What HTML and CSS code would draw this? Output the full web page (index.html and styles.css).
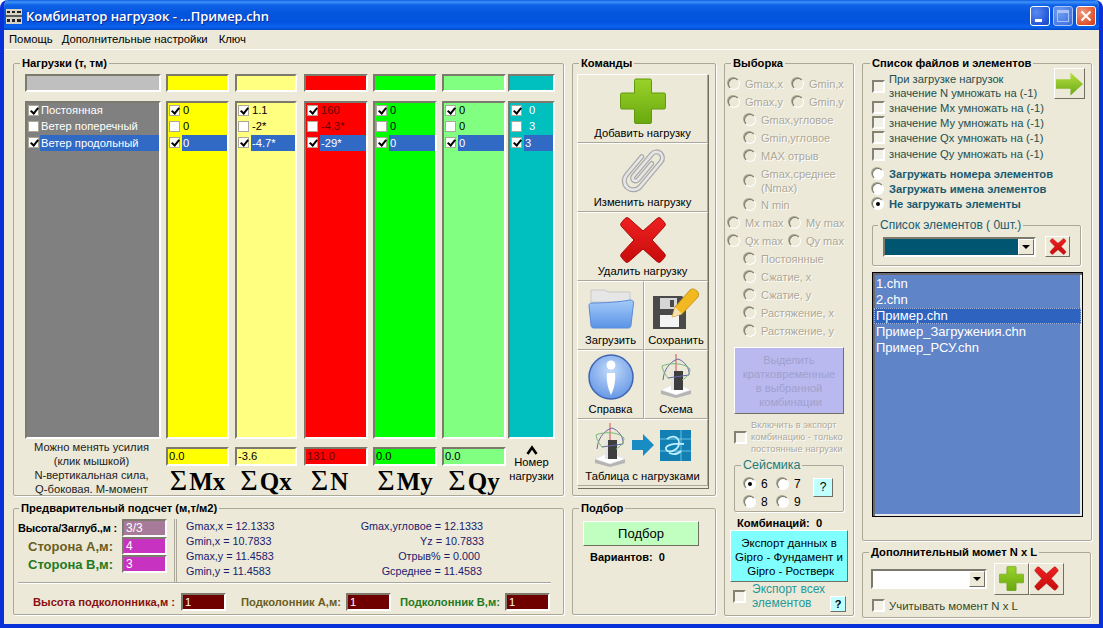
FILE: index.html
```html
<!DOCTYPE html>
<html lang="ru">
<head>
    <meta charset="UTF-8">
    <title>Комбинатор нагрузок</title>
    <link rel="stylesheet" href="styles.css">
</head>
<body>
<svg class="defs" aria-hidden="true">
    <defs>
        <linearGradient id="gPlus" x1="0" y1="0" x2="0" y2="1"><stop offset="0" stop-color="#9ad22a"/><stop offset="1" stop-color="#69a80e"/></linearGradient>
        <linearGradient id="gCross" x1="0" y1="0" x2="0" y2="1"><stop offset="0" stop-color="#ee2020"/><stop offset="1" stop-color="#c80c0c"/></linearGradient>
        <linearGradient id="gFolder" x1="0" y1="0" x2="0" y2="1"><stop offset="0" stop-color="#a4cbf8"/><stop offset="1" stop-color="#5b93e6"/></linearGradient>
        <radialGradient id="gInfo" cx="0.5" cy="0.35" r="0.7"><stop offset="0" stop-color="#c4dcfa"/><stop offset="1" stop-color="#5f92e4"/></radialGradient>
        <linearGradient id="gArrow" x1="0" y1="0" x2="0" y2="1"><stop offset="0" stop-color="#b8e040"/><stop offset="1" stop-color="#6aa818"/></linearGradient>
        <symbol id="plus" viewBox="0 0 46 46">
            <path d="M16 1h14a1.500 1.500 0 0 1 1.500 1.500V15H44a1.500 1.500 0 0 1 1.500 1.500v13a1.500 1.500 0 0 1-1.500 1.500H31.500v13a1.500 1.500 0 0 1-1.500 1.500H16a1.500 1.500 0 0 1-1.500-1.500V31H2a1.500 1.500 0 0 1-1.500-1.500v-13A1.500 1.500 0 0 1 2 15h12.500V2.500A1.500 1.500 0 0 1 16 1z" fill="url(#gPlus)" stroke="#5f9a0c"/>
        </symbol>
        <symbol id="cross" viewBox="0 0 48 48">
            <path d="M10 2.500 24 15 38 2.500a3 3 0 0 1 4 0l3.500 4a3 3 0 0 1 0 4L33 24l12.500 13.500a3 3 0 0 1 0 4l-3.500 4a3 3 0 0 1-4 0L24 33 10 45.500a3 3 0 0 1-4 0l-3.500-4a3 3 0 0 1 0-4L15 24 2.500 10.500a3 3 0 0 1 0-4L6 2.500a3 3 0 0 1 4 0z" fill="url(#gCross)" stroke="#a80808"/>
        </symbol>
        <symbol id="schema" viewBox="0 0 32 44">
            <path d="M1 36v4l15 4 15-4v-4z" fill="#b4b4b4"/>
            <path d="M1 36 16 29l15 7-15 5z" fill="#fff" stroke="#d8d8d8" stroke-width=".5"/>
            <rect x="11" y="17" width="3" height="19" fill="#e4e4e4"/>
            <rect x="14" y="17" width="9" height="19" fill="#3e3e3e"/>
            <path d="M16 0v17" stroke="#d05050"/>
            <path d="M3 26C4 12 14 6 18 5c6 2 12 9 11 16L8 24" fill="none" stroke="#6666a8"/>
            <path d="M2 12c6-3 22-4 28 3 0 5-4 9-8 11M2 12c1 6 4 10 7 13" fill="none" stroke="#78b878"/>
        </symbol>
    </defs>
</svg>

<div class="window">
    <div class="titlebar">
        <svg class="app-icon" width="16" height="15" viewBox="0 0 16 15">
            <rect width="16" height="15" fill="#d8d4c4"/>
            <path d="M1 2h3v2H1zM6 2h3v2H6zM11 2h4v2h-4z" fill="#222"/>
            <path d="M0 6h16v2H0z" fill="#5a5a5a"/>
            <path d="M1 10h3v3H1zM6 10h3v3H6zM11 10h4v3h-4z" fill="#223"/>
        </svg>
        <span class="title">Комбинатор нагрузок - ...Пример.chn</span>
        <div class="win-btns">
            <span class="win-btn"><i class="min-mark"></i></span>
            <span class="win-btn win-off"><i class="max-mark"></i></span>
            <span class="win-btn win-close">
                <svg width="12" height="12" viewBox="0 0 12 12"><path d="M1.500 1.500l9 9M10.500 1.500l-9 9" stroke="#fff" stroke-width="2"/></svg>
            </span>
        </div>
    </div>

    <div class="menu">
        <span>Помощь</span>
        <span>Дополнительные настройки</span>
        <span class="menu-last">Ключ</span>
    </div>

    <div class="content">
        <div class="col col-main">
            <fieldset class="group loads">
                <legend>Нагрузки (т, тм)</legend>
                <div class="load-cols">
                    <div class="load-col c-names">
                        <div class="swatch"></div>
                        <div class="load-list">
                            <label class="row"><input type="checkbox" class="chk" checked><span>Постоянная</span></label>
                            <label class="row"><input type="checkbox" class="chk"><span>Ветер поперечный</span></label>
                            <label class="row sel"><input type="checkbox" class="chk" checked><span>Ветер продольный</span></label>
                        </div>
                        <div class="hint">Можно менять усилия<br>(клик мышкой)<br>N-вертикальная сила,<br>Q-боковая. М-момент</div>
                    </div>
                    <div class="load-col c-mx">
                        <div class="swatch"></div>
                        <div class="load-list">
                            <label class="row"><input type="checkbox" class="chk" checked><span>0</span></label>
                            <label class="row"><input type="checkbox" class="chk"><span>0</span></label>
                            <label class="row sel"><input type="checkbox" class="chk" checked><span>0</span></label>
                        </div>
                        <div class="total">0.0</div>
                        <div class="sum"><b>Σ</b>Mx</div>
                    </div>
                    <div class="load-col c-qx">
                        <div class="swatch"></div>
                        <div class="load-list">
                            <label class="row"><input type="checkbox" class="chk" checked><span>1.1</span></label>
                            <label class="row"><input type="checkbox" class="chk"><span>-2*</span></label>
                            <label class="row sel"><input type="checkbox" class="chk" checked><span>-4.7*</span></label>
                        </div>
                        <div class="total">-3.6</div>
                        <div class="sum"><b>Σ</b>Qx</div>
                    </div>
                    <div class="load-col c-n">
                        <div class="swatch"></div>
                        <div class="load-list">
                            <label class="row"><input type="checkbox" class="chk" checked><span>160</span></label>
                            <label class="row"><input type="checkbox" class="chk"><span>-4.3*</span></label>
                            <label class="row sel"><input type="checkbox" class="chk" checked><span>-29*</span></label>
                        </div>
                        <div class="total">131.0</div>
                        <div class="sum"><b>Σ</b>N</div>
                    </div>
                    <div class="load-col c-my">
                        <div class="swatch"></div>
                        <div class="load-list">
                            <label class="row"><input type="checkbox" class="chk" checked><span>0</span></label>
                            <label class="row"><input type="checkbox" class="chk"><span>0</span></label>
                            <label class="row sel"><input type="checkbox" class="chk" checked><span>0</span></label>
                        </div>
                        <div class="total">0.0</div>
                        <div class="sum"><b>Σ</b>My</div>
                    </div>
                    <div class="load-col c-qy">
                        <div class="swatch"></div>
                        <div class="load-list">
                            <label class="row"><input type="checkbox" class="chk" checked><span>0</span></label>
                            <label class="row"><input type="checkbox" class="chk"><span>0</span></label>
                            <label class="row sel"><input type="checkbox" class="chk" checked><span>0</span></label>
                        </div>
                        <div class="total">0.0</div>
                        <div class="sum"><b>Σ</b>Qy</div>
                    </div>
                    <div class="load-col c-num">
                        <div class="swatch"></div>
                        <div class="load-list">
                            <label class="row"><input type="checkbox" class="chk" checked><span>0</span></label>
                            <label class="row"><input type="checkbox" class="chk"><span>3</span></label>
                            <label class="row sel"><input type="checkbox" class="chk" checked><span>3</span></label>
                        </div>
                        <div class="num-note">
                            <svg class="caret" width="12" height="10" viewBox="0 0 12 10"><path d="M1.500 9 6 2.500 10.500 9" fill="none" stroke="#000" stroke-width="2.600"/></svg>
                            Номер<br>нагрузки
                        </div>
                    </div>
                </div>
            </fieldset>

            <fieldset class="group prelim">
                <legend>Предварительный подсчет (м,т/м2)</legend>
                <div class="prelim-top">
                    <div class="sizes">
                        <span class="size-head">Высота/Заглуб.,м :</span><div class="size-box box-muted">3/3</div>
                        <span class="size-label olive">Сторона А,м:</span><div class="size-box">4</div>
                        <span class="size-label green">Сторона В,м:</span><div class="size-box">3</div>
                    </div>
                    <div class="stats">
                        <span>Gmax,x = 12.1333</span><span class="st-r">Gmax,угловое = 12.1333</span>
                        <span>Gmin,x = 10.7833</span><span class="st-r st-yz">Yz = 10.7833</span>
                        <span>Gmax,y = 11.4583</span><span class="st-r st-otr">Отрыв% = 0.000</span>
                        <span>Gmin,y = 11.4583</span><span class="st-r st-avg">Gсреднее = 11.4583</span>
                    </div>
                </div>
                <div class="prelim-bottom">
                    <span class="pod-l1 dark-red">Высота подколонника,м :</span><div class="pod-box">1</div>
                    <span class="pod-l2 olive">Подколонник А,м:</span><div class="pod-box">1</div>
                    <span class="pod-l3 green">Подколонник В,м:</span><div class="pod-box">1</div>
                </div>
            </fieldset>
        </div>

        <div class="col col-cmd">
            <fieldset class="group commands">
                <legend>Команды</legend>
                <div class="cmd-grid">
                    <div class="cmd wide">
                        <svg width="46" height="46"><use href="#plus"/></svg>
                        <span>Добавить нагрузку</span>
                    </div>
                    <div class="cmd wide">
                        <svg width="46" height="46" viewBox="0 0 46 46">
                            <g transform="rotate(40 23 23) translate(-4.500 -4.500) scale(1.200)" fill="none" stroke-linecap="round">
                                <path d="M15 15V35a7.500 7.500 0 0 0 15 0V8a5 5 0 0 0-10 0V32a2.500 2.500 0 0 0 5 0V14" stroke="#a8a8a8" stroke-width="4.200"/>
                                <path d="M15 15V35a7.500 7.500 0 0 0 15 0V8a5 5 0 0 0-10 0V32a2.500 2.500 0 0 0 5 0V14" stroke="#e6e6e6" stroke-width="2.200"/>
                            </g>
                        </svg>
                        <span>Изменить нагрузку</span>
                    </div>
                    <div class="cmd wide">
                        <svg width="48" height="48"><use href="#cross"/></svg>
                        <span>Удалить нагрузку</span>
                    </div>
                    <div class="cmd">
                        <svg width="46" height="46" viewBox="0 0 46 46">
                            <path d="M3 5h14l3 2h22v10H3z" fill="#e6e6e6" stroke="#c8c8c8"/>
                            <path d="M4 18C16 18 32 17 42 15c2 0 4 1 3.500 3L43 40c0 2-1 3-3 3H6c-2 0-3-1-3-3L1 21c0-2 1-3 3-3z" fill="url(#gFolder)" stroke="#5a8ad8"/>
                        </svg>
                        <span>Загрузить</span>
                    </div>
                    <div class="cmd">
                        <svg width="46" height="46" viewBox="0 0 46 46">
                            <path d="M0 11h29l4 4v29H0z" fill="#4a4a4a"/>
                            <rect x="7" y="13" width="17" height="11" fill="#d6d6d6"/>
                            <rect x="17" y="15" width="4" height="7" fill="#4a4a4a"/>
                            <rect x="7" y="30" width="19" height="12" fill="#f4f4f4"/>
                            <path d="M22 22 37 5c2-2 5-1 7 1 2 2 2 4 1 6L29 29l-10 3z" fill="#f2b820" stroke="#b88810" stroke-width=".8"/>
                            <path d="M22 22l7 7-10 3z" fill="#f4e0b0"/>
                        </svg>
                        <span>Сохранить</span>
                    </div>
                    <div class="cmd">
                        <svg width="46" height="46" viewBox="0 0 46 46">
                            <circle cx="23" cy="23" r="22" fill="url(#gInfo)" stroke="#4064b4" stroke-width="1.500"/>
                            <circle cx="23" cy="11" r="4.500" fill="#fff"/>
                            <path d="M19 19h8c1 7-1 16-4 22-3-6-5-15-4-22z" fill="#fff"/>
                        </svg>
                        <span>Справка</span>
                    </div>
                    <div class="cmd">
                        <svg width="32" height="44"><use href="#schema"/></svg>
                        <span>Схема</span>
                    </div>
                    <div class="cmd wide cmd-last">
                        <div class="cmd-icons">
                            <svg width="32" height="44"><use href="#schema"/></svg>
                            <svg width="24" height="24" viewBox="0 0 24 24"><path d="M1 7h11V1l11 11-11 11v-6H1z" fill="#1a8cc4"/></svg>
                            <svg width="31" height="31" viewBox="0 0 31 31">
                                <rect width="31" height="31" fill="#1380b4"/>
                                <path d="M21 0v31M0 9h31M0 21h31" stroke="#7fd0f0" stroke-width=".8"/>
                                <path d="M7 9c5-4 12-3 12 4 0 8-12 11-13 6-1-4 8-6 18-5M9 23c5 2 9 1 12-2" fill="none" stroke="#bfeeff" stroke-width="1.800"/>
                            </svg>
                        </div>
                        <span>Таблица с нагрузками</span>
                    </div>
                </div>
            </fieldset>

            <fieldset class="group pick">
                <legend>Подбор</legend>
                <div class="pick-btn">Подбор</div>
                <div class="pick-count">Вариантов:&nbsp; 0</div>
            </fieldset>
        </div>

        <div class="col col-sel">
            <fieldset class="group select">
                <legend>Выборка</legend>
                <div class="sel-list">
                    <div class="opt-row">
                        <label class="opt o-left"><input type="radio" class="rad" name="sel" disabled><span>Gmax,x</span></label>
                        <label class="opt"><input type="radio" class="rad" name="sel" disabled><span>Gmin,x</span></label>
                    </div>
                    <div class="opt-row">
                        <label class="opt o-left"><input type="radio" class="rad" name="sel" disabled><span>Gmax,y</span></label>
                        <label class="opt"><input type="radio" class="rad" name="sel" disabled><span>Gmin,y</span></label>
                    </div>
                    <label class="opt indent"><input type="radio" class="rad" name="sel" disabled><span>Gmax,угловое</span></label>
                    <label class="opt indent"><input type="radio" class="rad" name="sel" disabled><span>Gmin,угловое</span></label>
                    <label class="opt indent"><input type="radio" class="rad" name="sel" disabled><span>MAX отрыв</span></label>
                    <label class="opt indent tall"><input type="radio" class="rad" name="sel" disabled><span>Gmax,среднее<br>(Nmax)</span></label>
                    <label class="opt indent"><input type="radio" class="rad" name="sel" disabled><span>N min</span></label>
                    <div class="opt-row">
                        <label class="opt o-left2"><input type="radio" class="rad" name="sel" disabled><span>Mx max</span></label>
                        <label class="opt"><input type="radio" class="rad" name="sel" disabled><span>My max</span></label>
                    </div>
                    <div class="opt-row">
                        <label class="opt o-left2"><input type="radio" class="rad" name="sel" disabled><span>Qx max</span></label>
                        <label class="opt"><input type="radio" class="rad" name="sel" disabled><span>Qy max</span></label>
                    </div>
                    <label class="opt indent"><input type="radio" class="rad" name="sel" disabled><span>Постоянные</span></label>
                    <label class="opt indent"><input type="radio" class="rad" name="sel" disabled><span>Сжатие, x</span></label>
                    <label class="opt indent"><input type="radio" class="rad" name="sel" disabled><span>Сжатие, y</span></label>
                    <label class="opt indent"><input type="radio" class="rad" name="sel" disabled><span>Растяжение, x</span></label>
                    <label class="opt indent"><input type="radio" class="rad" name="sel" disabled><span>Растяжение, y</span></label>
                </div>
                <div class="mark-btn">Выделить<br>кратковременные<br>в выбранной<br>&nbsp;комбинации</div>
                <label class="include"><input type="checkbox" class="chk big" disabled><span>Включить в экспорт<br>комбинацию - только<br>постоянные нагрузки</span></label>
                <fieldset class="group seismic">
                    <legend>Сейсмика</legend>
                    <div class="seis-grid">
                        <label class="seis"><input type="radio" class="rad" name="seis" checked><span>6</span></label>
                        <label class="seis"><input type="radio" class="rad" name="seis"><span>7</span></label>
                        <label class="seis"><input type="radio" class="rad" name="seis"><span>8</span></label>
                        <label class="seis"><input type="radio" class="rad" name="seis"><span>9</span></label>
                    </div>
                    <div class="q-btn q-big">?</div>
                </fieldset>
                <div class="combos">Комбинаций:&nbsp; 0</div>
                <div class="export-btn">Экспорт данных в<br>Gipro - Фундамент и<br>&nbsp;Gipro - Ростверк</div>
                <div class="export-all">
                    <input type="checkbox" class="chk big">
                    <span>Экспорт всех<br>элементов</span>
                    <div class="q-btn q-small">?</div>
                </div>
            </fieldset>
        </div>

        <div class="col col-files">
            <fieldset class="group files">
                <legend>Список файлов и элементов</legend>
                <div class="files-top">
                    <label class="flag flag-first"><input type="checkbox" class="chk big"><span>При загрузке нагрузок<br>значение N умножать на (-1)</span></label>
                    <div class="arrow-btn">
                        <svg width="30" height="24" viewBox="0 0 30 24"><path d="M1 7h15V0l13 12-13 12v-7H1z" fill="url(#gArrow)"/></svg>
                    </div>
                </div>
                <label class="flag"><input type="checkbox" class="chk big"><span>значение Mx умножать на (-1)</span></label>
                <label class="flag"><input type="checkbox" class="chk big"><span>значение My умножать на (-1)</span></label>
                <label class="flag"><input type="checkbox" class="chk big"><span>значение Qx умножать на (-1)</span></label>
                <label class="flag flag-last"><input type="checkbox" class="chk big"><span>значение Qy умножать на (-1)</span></label>
                <label class="mode"><input type="radio" class="rad" name="mode"><span>Загружать номера элементов</span></label>
                <label class="mode"><input type="radio" class="rad" name="mode"><span>Загружать имена элементов</span></label>
                <label class="mode"><input type="radio" class="rad" name="mode" checked><span>Не загружать элементы</span></label>
                <fieldset class="group elements">
                    <legend>Список элементов ( 0шт.)</legend>
                    <div class="el-row">
                        <div class="combo combo-teal"><div class="combo-arrow"></div></div>
                        <div class="x-btn"><svg width="18" height="17"><use href="#cross"/></svg></div>
                    </div>
                </fieldset>
                <div class="listbox">
                    <div class="lb-row">1.chn</div>
                    <div class="lb-row">2.chn</div>
                    <div class="lb-row lb-sel">Пример.chn</div>
                    <div class="lb-row">Пример_Загружения.chn</div>
                    <div class="lb-row">Пример_РСУ.chn</div>
                </div>
            </fieldset>

            <fieldset class="group extra">
                <legend>Дополнительный момет N x L</legend>
                <div class="extra-row">
                    <div class="combo combo-white"><div class="combo-arrow"></div></div>
                    <div class="ex-btn"><svg width="25" height="25"><use href="#plus"/></svg></div>
                    <div class="ex-btn"><svg width="25" height="25"><use href="#cross"/></svg></div>
                </div>
                <label class="extra-check"><input type="checkbox" class="chk big"><span>Учитывать момент N x L</span></label>
            </fieldset>
        </div>
    </div>
</div>
</body>
</html>
```

FILE: styles.css
```css
* {
    box-sizing: border-box;
}
html, body {
    margin: 0;
    padding: 0;
    background: #fff;
}
body {
    width: 1103px;
    height: 628px;
    overflow: hidden;
    font-family: "Liberation Sans", Arial, sans-serif;
    font-size: 12px;
    color: #000;
}
.defs {
    position: absolute;
    width: 0;
    height: 0;
}
.window {
    width: 1103px;
    height: 628px;
    display: flex;
    flex-direction: column;
    background: #ece9d8;
    border-left: 4px solid #0831d9;
    border-right: 4px solid #0831d9;
    border-bottom: 4px solid #0831d9;
    border-radius: 8px 8px 0 0;
    overflow: hidden;
}

/* title bar */
.titlebar {
    height: 30px;
    margin: 0 -4px;
    padding: 2px 7px 0 6px;
    display: flex;
    align-items: center;
    flex: none;
    background: linear-gradient(#0a5ce0 0, #3f93f8 2px, #0f62e8 5px, #0454dc 14px, #0454e0 22px, #0a62ec 27px, #0348c8 30px);
}
.app-icon {
    margin-right: 4px;
    flex: none;
}
.title {
    font-family: "Open Sans", sans-serif;
    font-size: 13px;
    font-weight: 600;
    letter-spacing: -0.05px;
    color: #fff;
    text-shadow: 1px 1px #0f2a89;
}
.win-btns {
    margin-left: auto;
    display: flex;
    gap: 3px;
}
.win-btn {
    width: 20px;
    height: 20px;
    border: 1px solid #fff;
    border-radius: 3px;
    display: flex;
    align-items: center;
    justify-content: center;
    position: relative;
    background: radial-gradient(circle at 30% 30%, #5a8cf0, #2456d8 70%, #1c44b8);
}
.win-off {
    background: radial-gradient(circle at 30% 30%, #6f9cf0, #4a7ae4 70%, #3a66d0);
    border-color: #a8c4f4;
}
.win-close {
    background: radial-gradient(circle at 30% 30%, #f09a80, #e0532e 70%, #c83a18);
}
.min-mark {
    position: absolute;
    left: 4px;
    bottom: 3px;
    width: 7px;
    height: 3px;
    background: #fff;
}
.max-mark {
    width: 12px;
    height: 12px;
    border: 1px solid #a8c4f4;
    border-top-width: 3px;
}

/* menu */
.menu {
    height: 20px;
    flex: none;
    padding: 0 0 2px 5px;
    display: flex;
    align-items: center;
    gap: 9px;
    font-size: 11.3px;
    border-bottom: 1px solid #fff;
}
.menu-last {
    margin-left: 2px;
}

/* columns */
.content {
    flex: 1;
    padding: 6px 0 0 9px;
    display: flex;
    gap: 8px;
}
.col {
    display: flex;
    flex-direction: column;
    gap: 5px;
    flex: none;
}
.col-main { width: 551px; }
.col-cmd { width: 144px; }
.col-sel { width: 130px; }
.col-files { width: 230px; gap: 4px; }

fieldset.group {
    margin: 0;
    padding: 0;
    min-width: 0;
    border: 1px solid #aca899;
    border-radius: 2px;
    box-shadow: 1px 1px 0 #fff;
}
fieldset.group > legend {
    margin-left: 6px;
    padding: 0 2px;
    height: 14px;
    line-height: 14px;
    font-size: 11.2px;
    font-weight: bold;
}

/* custom check / radio */
.chk, .rad {
    appearance: none;
    margin: 0;
    flex: none;
    position: relative;
    background: #fff;
}
.chk {
    width: 11px;
    height: 11px;
    border: 1px solid #aca899;
}
.chk:checked::after {
    content: "";
    position: absolute;
    left: 2.500px;
    top: 0;
    width: 3px;
    height: 6px;
    border: solid #000;
    border-width: 0 2px 2px 0;
    transform: rotate(40deg);
}
.chk.big {
    width: 13px;
    height: 13px;
    background: #f4f2e8;
    border-width: 2px;
    border-color: #848272 #fff #fff #848272;
}
.rad {
    width: 12px;
    height: 12px;
    border-radius: 50%;
    border: 1px solid #7a7868;
    border-bottom-color: #fff;
    border-right-color: #fff;
    box-shadow: -1px -1px 0 #a8a594;
}
.rad:checked::after {
    content: "";
    position: absolute;
    left: 3px;
    top: 3px;
    width: 4px;
    height: 4px;
    border-radius: 50%;
    background: #000;
}
.rad:disabled {
    background: #ece9d8;
}

/* loads */
fieldset.loads {
    height: 440px;
    padding: 4px 0 0 11px;
}
fieldset.loads > legend {
    margin-left: -5px;
}
.load-cols {
    display: flex;
    height: 100%;
}
.load-col {
    flex: none;
    display: flex;
    flex-direction: column;
}
.swatch {
    height: 18px;
    border: 2px solid;
    border-color: #7c7a6c #fff #fff #7c7a6c;
    background: var(--fill);
}
.load-list {
    height: 338px;
    margin-top: 9px;
    border: 2px solid;
    border-color: #7c7a6c #fff #fff #7c7a6c;
    background: var(--fill);
    color: var(--ink);
}
.row {
    height: 16px;
    padding-left: 1px;
    display: flex;
    align-items: center;
    gap: 2px;
    line-height: 16px;
    font-size: 11.2px;
    white-space: nowrap;
}
.c-names .row {
    gap: 1px;
}
.row .chk {
    margin-top: -2px;
}
.row span {
    flex: 1;
    padding-left: 1px;
    position: relative;
    top: -1px;
    height: 16px;
}
.row.sel span {
    top: 0;
    background: #316ac5;
    color: #fff;
}
.c-names { width: 136px; --fill: #808080; --ink: #fff; }
.c-names .swatch { --fill: #bfbfbf; }
.c-mx { width: 63px; margin-left: 5px; --fill: #ffff00; --ink: #000; }
.c-qx { width: 62px; margin-left: 6px; --fill: #ffff80; --ink: #000; }
.c-n { width: 64px; margin-left: 7px; --fill: #ff0000; --ink: #6a0000; }
.c-my { width: 64px; margin-left: 5px; --fill: #00ff00; --ink: #000; }
.c-qy { width: 64px; margin-left: 5px; --fill: #80ff80; --ink: #000; }
.c-num { width: 47px; margin-left: 2px; --fill: #00bfbf; --ink: #fff; }
.c-num .row:not(.sel) span {
    padding-left: 5px;
}
.total {
    height: 19px;
    margin-top: 8px;
    padding-left: 1px;
    border: 2px solid;
    border-color: #7c7a6c #fff #fff #7c7a6c;
    background: var(--fill);
    color: var(--ink);
    line-height: 15px;
    font-size: 11.2px;
}
.sum {
    margin-top: 0;
    height: 28px;
    line-height: 28px;
    text-align: center;
    white-space: nowrap;
    font-family: "Liberation Serif", serif;
    font-size: 25px;
    font-weight: bold;
    color: #000;
}
.sum b {
    font-weight: normal;
    font-size: 30px;
    margin-right: 2px;
}
.c-n .sum {
    padding-right: 13px;
}
.hint {
    margin-top: 1px;
    padding-right: 3px;
    text-align: center;
    font-size: 11.2px;
    line-height: 14px;
    color: #222;
}
.num-note {
    margin-top: 6px;
    text-align: center;
    font-size: 11.2px;
    line-height: 14px;
}
.caret {
    display: block;
    margin: 0 auto;
}

/* preliminary */
fieldset.prelim {
    height: 114px;
    padding: 4px 0 0 4px;
}
fieldset.prelim > legend {
    margin-left: 1px;
}
.prelim-top {
    display: flex;
    height: 64px;
    margin-right: 12px;
    border-bottom: 1px solid #aca899;
    box-shadow: 0 1px 0 #fff;
}
.sizes {
    width: 159px;
    display: grid;
    grid-template-columns: 104px 45px;
    grid-auto-rows: 18px;
    align-items: center;
    border-right: 3px double #aca899;
}
.size-head {
    font-size: 11px;
    font-weight: bold;
    letter-spacing: -0.2px;
    white-space: nowrap;
}
.size-label {
    padding-left: 10px;
    font-size: 13px;
    font-weight: bold;
    white-space: nowrap;
}
.size-box {
    height: 18px;
    padding-left: 2px;
    border: 2px solid;
    border-color: #7c7a6c #fff #fff #7c7a6c;
    background: #c832c0;
    color: #fff;
    line-height: 15px;
}
.box-muted {
    background: #a87a9a;
}
.olive { color: #6b5d20; }
.green { color: #1f7a1f; }
.dark-red { color: #8a1010; }
.stats {
    flex: 1;
    display: grid;
    grid-template-columns: auto 1fr;
    grid-auto-rows: 15px;
    padding: 0 67px 0 9px;
    font-size: 10.8px;
    line-height: 15px;
    color: #1a1a6e;
}
.st-r { text-align: right; padding-right: 1px; }
.st-yz { padding-right: 0; }
.st-otr { padding-right: 4px; }
.st-avg { padding-right: 2px; }
.prelim-bottom {
    display: flex;
    align-items: center;
    height: 17px;
    margin-top: 10px;
    margin-left: 15px;
    font-size: 11.2px;
    font-weight: bold;
    white-space: nowrap;
}
.pod-l1 { width: 148px; }
.pod-l2 { width: 105px; margin-left: 15px; }
.pod-l3 { width: 105px; margin-left: 9px; }
.pod-box {
    flex: none;
    width: 45px;
    height: 18px;
    padding-left: 2px;
    border: 2px solid;
    border-color: #7c7a6c #fff #fff #7c7a6c;
    background: #700000;
    color: #fff;
    font-weight: normal;
    line-height: 15px;
}

/* commands */
fieldset.commands {
    height: 440px;
    padding: 4px 0 0 4px;
}
fieldset.commands > legend {
    margin-left: 2px;
}
.cmd-grid {
    width: 131px;
    display: grid;
    grid-template-columns: 67px 64px;
    grid-auto-rows: 69px;
    box-shadow: 1px 1px 0 #716f64;
}
.cmd {
    border: 1px solid;
    border-color: #fff #aca899 #aca899 #fff;
    display: flex;
    flex-direction: column;
    align-items: center;
    justify-content: space-between;
    padding: 3px 0 2px;
    font-size: 11.2px;
    line-height: 14px;
    white-space: nowrap;
    overflow: hidden;
}
.cmd.wide {
    grid-column: span 2;
}
.cmd-last {
    height: 67px;
}
.cmd-icons {
    display: flex;
    align-items: center;
    gap: 5px;
}

/* pick */
fieldset.pick {
    height: 114px;
    padding: 6px 0 0 10px;
}
fieldset.pick > legend {
    margin-left: -4px;
}
.pick-btn {
    width: 116px;
    height: 25px;
    border: 1px solid;
    border-color: #fff #716f64 #716f64 #fff;
    background: #c0ffc0;
    text-align: center;
    line-height: 23px;
    font-size: 13px;
}
.pick-count {
    margin: 5px 0 0 7px;
    font-size: 11px;
    font-weight: bold;
}

/* selection */
fieldset.select {
    height: 560px;
    padding: 5px 0 0 3px;
}
fieldset.select > legend {
    margin-left: 3px;
}
.opt {
    height: 18px;
    display: flex;
    align-items: center;
    gap: 5px;
    font-size: 11px;
    line-height: 14px;
    color: #aca899;
    text-shadow: 1px 1px #fff;
    white-space: nowrap;
}
.opt-row {
    display: flex;
}
.o-left { width: 64px; }
.o-left2 { width: 61px; }
.indent { margin-left: 16px; }
.tall { height: 31px; }
.mark-btn {
    width: 110px;
    height: 67px;
    margin: 7px 0 0 6px;
    border: 1px solid;
    border-color: #fff #716f64 #716f64 #fff;
    background: #b9b9f0;
    color: #a0a0cc;
    text-align: center;
    font-size: 11.2px;
    line-height: 14px;
    padding-top: 5px;
    white-space: nowrap;
}
.include {
    height: 38px;
    margin: 4px 0 0 6px;
    display: flex;
    align-items: center;
    gap: 4px;
    font-size: 9.2px;
    line-height: 12px;
    letter-spacing: 0.1px;
    color: #aca899;
    text-shadow: 1px 1px #fff;
    white-space: nowrap;
}
fieldset.seismic {
    width: 110px;
    height: 54px;
    margin: 2px 0 0 6px;
    padding: 3px 0 0 9px;
    display: flex;
}
fieldset.seismic > legend {
    margin-left: -3px;
    font-size: 12.5px;
    font-weight: normal;
    color: #1f7a7a;
}
.seis-grid {
    width: 66px;
    display: grid;
    grid-template-columns: 33px 33px;
    grid-auto-rows: 18px;
}
.seis {
    display: flex;
    align-items: center;
    gap: 5px;
    font-size: 12px;
}
.q-btn {
    border: 1px solid;
    border-color: #fff #716f64 #716f64 #fff;
    background: #c0ffff;
    text-align: center;
}
.q-big {
    width: 20px;
    height: 19px;
    margin: 3px 0 0 3px;
    line-height: 17px;
    font-size: 12px;
}
.combos {
    margin: 4px 0 0 9px;
    height: 15px;
    line-height: 15px;
    font-size: 11.2px;
    font-weight: bold;
    white-space: nowrap;
}
.export-btn {
    width: 118px;
    height: 52px;
    margin: -1px 0 0 2px;
    padding-top: 5px;
    border: 1px solid;
    border-color: #fff #716f64 #716f64 #fff;
    background: #80ffff;
    text-align: center;
    font-size: 11.5px;
    line-height: 14px;
    white-space: nowrap;
}
.export-all {
    display: flex;
    height: 28px;
    margin: 0 0 0 5px;
    align-items: center;
    gap: 6px;
    font-size: 12px;
    line-height: 14px;
    color: #1f9a9a;
    white-space: nowrap;
}
.q-small {
    width: 16px;
    height: 16px;
    margin: 15px 0 0 -1px;
    color: #000;
    font-size: 11px;
    line-height: 14px;
    font-weight: bold;
}

/* files */
fieldset.files {
    height: 485px;
    padding: 2px 0 0 9px;
}
fieldset.files > legend {
    margin-left: -2px;
}
.files-top {
    display: flex;
    align-items: flex-start;
    height: 28px;
}
.arrow-btn {
    width: 31px;
    height: 31px;
    margin: -4px 6px 0 auto;
    border: 1px solid;
    border-color: #fff #716f64 #716f64 #fff;
    display: flex;
    align-items: center;
    justify-content: center;
    overflow: hidden;
}
.flag {
    height: 15px;
    display: flex;
    align-items: center;
    gap: 4px;
    font-size: 11.2px;
    line-height: 14px;
    color: #244e4e;
    white-space: nowrap;
}
.flag-first {
    height: 28px;
}
.flag-last {
    height: 18px;
    margin-bottom: 3px;
}
.mode {
    height: 15px;
    display: flex;
    align-items: center;
    gap: 5px;
    font-size: 11.2px;
    font-weight: bold;
    color: #1a5a70;
    white-space: nowrap;
}
fieldset.elements {
    width: 209px;
    height: 48px;
    margin-top: 7px;
    padding: 4px 0 0 10px;
}
fieldset.elements > legend {
    margin-left: -5px;
    font-weight: normal;
    font-size: 12px;
    color: #1a5a70;
}
.el-row {
    display: flex;
    align-items: center;
    gap: 9px;
}
.combo {
    height: 20px;
    border: 2px solid;
    border-color: #7c7a6c #fff #fff #7c7a6c;
    display: flex;
    justify-content: flex-end;
}
.combo-teal {
    width: 153px;
    background: #005570;
}
.combo-white {
    width: 116px;
    background: #fff;
}
.combo-arrow {
    width: 16px;
    height: 16px;
    border: 1px solid;
    border-color: #fff #716f64 #716f64 #fff;
    background: #ece9d8;
    position: relative;
}
.combo-arrow::after {
    content: "";
    position: absolute;
    left: 3px;
    top: 5px;
    border: 4px solid transparent;
    border-top-color: #000;
}
.x-btn {
    width: 25px;
    height: 21px;
    border: 1px solid;
    border-color: #fff #716f64 #716f64 #fff;
    display: flex;
    align-items: center;
    justify-content: center;
}
.listbox {
    width: 211px;
    height: 245px;
    margin-top: 6px;
    padding: 3px 1px;
    border: 1px solid #000;
    background: #5f84c8;
    box-shadow: inset 2px 2px 0 #6a6a70, inset -2px -2px 0 #e8e8e8;
    color: #fff;
    font-size: 13px;
}
.lb-row {
    height: 16px;
    line-height: 16px;
    padding-left: 2px;
    white-space: nowrap;
}
.lb-sel {
    background: #2e64c0;
    outline: 1px dotted #a8b8d8;
    outline-offset: -1px;
}

/* extra moment */
fieldset.extra {
    width: 229px;
    height: 73px;
    padding: 4px 0 0 8px;
}
fieldset.extra > legend {
    margin-left: -2px;
}
.extra-row {
    display: flex;
    align-items: center;
    height: 31px;
}
.extra-row .combo {
    margin-right: 7px;
}
.ex-btn {
    width: 35px;
    height: 32px;
    border: 1px solid;
    border-color: #fff #716f64 #716f64 #fff;
    display: flex;
    align-items: center;
    justify-content: center;
}
.extra-check {
    display: flex;
    align-items: center;
    gap: 4px;
    height: 15px;
    margin: 4px 0 0 1px;
    font-size: 11.4px;
    color: #2c4a2c;
    white-space: nowrap;
}
```
